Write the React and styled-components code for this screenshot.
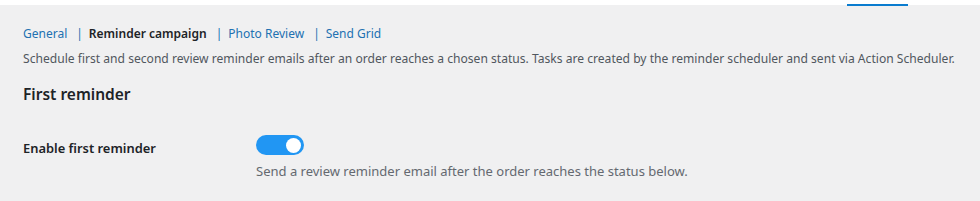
import React from "react";
import styled, { createGlobalStyle } from "styled-components";

const GlobalStyle = createGlobalStyle`
  body {
    margin: 0;
    background: #f0f0f1;
    font-family: "Noto Sans", "Open Sans", sans-serif;
    color: #1d2327;
  }
`;

const TopBar = styled.div`
  height: 5px;
  background: #ffffff;
  display: flex;
`;

const ActiveTab = styled.div`
  margin-left: 847px;
  width: 61px;
  height: 2px;
  margin-top: 4px;
  background: #0a7ccf;
`;

const Page = styled.div`
  padding: 20px 23px 0;
`;

const Tabs = styled.ul`
  list-style: none;
  margin: 0;
  padding: 0;
  display: flex;
  font-size: 12px;
  line-height: 18px;
`;

const Tab = styled.li`
  color: ${(p) => (p.current ? "#1d2327" : "#2271b1")};
  font-weight: ${(p) => (p.current ? 600 : 400)};
`;

const Sep = styled.li`
  color: #2271b1;
  margin: 0 6px 0 9px;
`;

const Intro = styled.p`
  margin: 7px 0 0;
  font-size: 12.1px;
  line-height: 18px;
  color: #50575e;
  white-space: nowrap;
`;

const Heading = styled.h2`
  margin: 15px 0 0;
  font-size: 15.5px;
  line-height: 22px;
  font-weight: 600;
  color: #1d2327;
`;

const Row = styled.div`
  display: grid;
  grid-template-columns: 233px 1fr;
  margin-top: 30px;
`;

const Label = styled.div`
  font-size: 12.9px;
  font-weight: 600;
  line-height: 20px;
  padding-top: 3px;
  color: #1d2327;
`;

const Field = styled.div`
  display: flex;
  flex-direction: column;
  align-items: flex-start;
`;

const Switch = styled.span`
  width: 48px;
  height: 20px;
  border-radius: 10px;
  background: ${(p) => (p.on ? "#2196f3" : "#c3c4c7")};
  display: flex;
  align-items: center;
  justify-content: ${(p) => (p.on ? "flex-end" : "flex-start")};
  padding: 0 3px;
  box-sizing: border-box;
`;

const Knob = styled.span`
  width: 15px;
  height: 15px;
  border-radius: 50%;
  background: #ffffff;
`;

const Help = styled.p`
  margin: 6px 0 0;
  font-size: 13px;
  line-height: 20px;
  color: #646970;
`;

export default function App() {
  return (
    <>
      <GlobalStyle />
      <TopBar>
        <ActiveTab />
      </TopBar>
      <Page>
        <Tabs>
          <Tab>General</Tab>
          <Sep>|</Sep>
          <Tab current>Reminder campaign</Tab>
          <Sep>|</Sep>
          <Tab>Photo Review</Tab>
          <Sep>|</Sep>
          <Tab>Send Grid</Tab>
        </Tabs>
        <Intro>
          Schedule first and second review reminder emails after an order reaches a chosen status. Tasks are created by the reminder scheduler and sent via Action Scheduler.
        </Intro>
        <Heading>First reminder</Heading>
        <Row>
          <Label>Enable first reminder</Label>
          <Field>
            <Switch on>
              <Knob />
            </Switch>
            <Help>Send a review reminder email after the order reaches the status below.</Help>
          </Field>
        </Row>
      </Page>
    </>
  );
}
